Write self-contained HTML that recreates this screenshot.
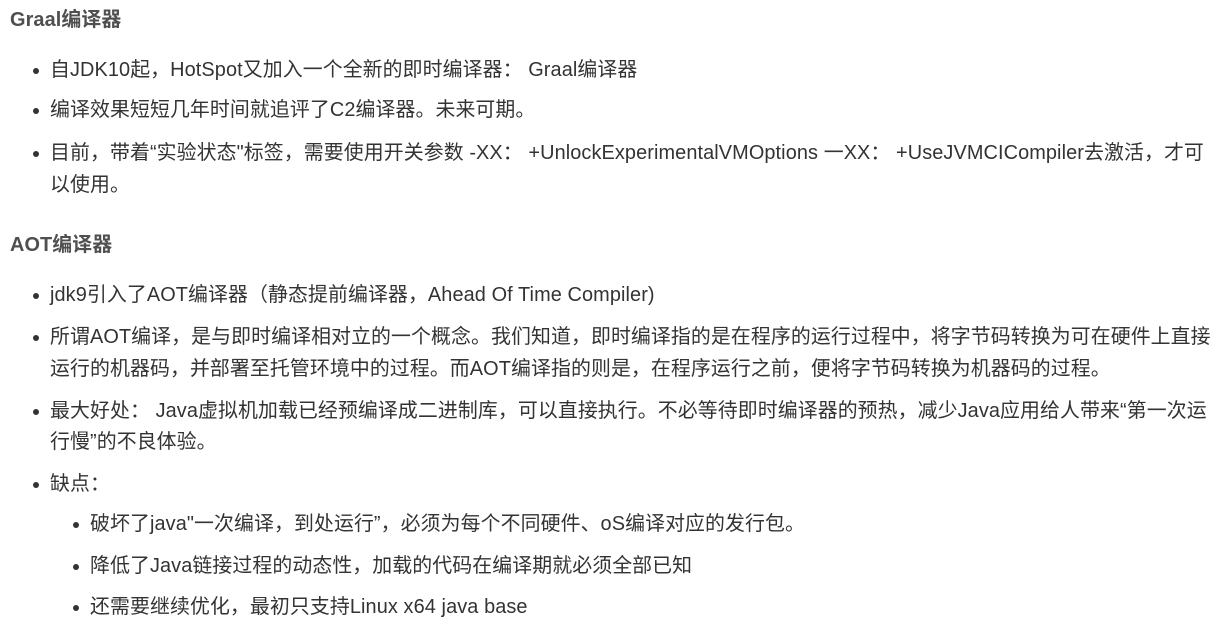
<!DOCTYPE html>
<html><head><meta charset="utf-8"><style>
body{margin:0;width:1225px;height:633px;background:#fff;overflow:hidden;font-family:"Liberation Sans","Noto Sans CJK SC",sans-serif;color:#333;}
.l{position:absolute;white-space:nowrap;font-size:19.9px;line-height:32px;height:32px;letter-spacing:0.1px;}
.h{font-weight:bold;color:#4f4f4f;}
.b{position:absolute;width:6px;height:6px;border-radius:50%;background:#333;}
</style></head><body>
<div class="l h" style="left:10px;top:4px">Graal编译器</div>
<div class="b" style="left:33px;top:68px"></div><div class="l" style="left:50px;top:54px">自JDK10起，HotSpot又加入一个全新的即时编译器： Graal编译器</div>
<div class="b" style="left:33px;top:108px"></div><div class="l" style="left:50px;top:94px">编译效果短短几年时间就追评了C2编译器。未来可期。</div>
<div class="b" style="left:33px;top:151px"></div><div class="l" style="left:50px;top:137px">目前，带着“实验状态"标签，需要使用开关参数 -XX： +UnlockExperimentalVMOptions 一XX： +UseJVMCICompiler去激活，才可</div>
<div class="l" style="left:50px;top:169px">以使用。</div>
<div class="l h" style="left:10px;top:229px">AOT编译器</div>
<div class="b" style="left:33px;top:293px"></div><div class="l" style="left:50px;top:279px">jdk9引入了AOT编译器（静态提前编译器，Ahead Of Time Compiler)</div>
<div class="b" style="left:33px;top:335px"></div><div class="l" style="left:50px;top:321px">所谓AOT编译，是与即时编译相对立的一个概念。我们知道，即时编译指的是在程序的运行过程中，将字节码转换为可在硬件上直接</div>
<div class="l" style="left:50px;top:353px">运行的机器码，并部署至托管环境中的过程。而AOT编译指的则是，在程序运行之前，便将字节码转换为机器码的过程。</div>
<div class="b" style="left:33px;top:409px"></div><div class="l" style="left:50px;top:395px">最大好处： Java虚拟机加载已经预编译成二进制库，可以直接执行。不必等待即时编译器的预热，减少Java应用给人带来“第一次运</div>
<div class="l" style="left:50px;top:426px">行慢”的不良体验。</div>
<div class="b" style="left:33px;top:482px"></div><div class="l" style="left:50px;top:468px">缺点：</div>
<div class="b" style="left:73px;top:522px"></div><div class="l" style="left:90px;top:508px">破坏了java"一次编译，到处运行”，必须为每个不同硬件、oS编译对应的发行包。</div>
<div class="b" style="left:73px;top:564px"></div><div class="l" style="left:90px;top:550px">降低了Java链接过程的动态性，加载的代码在编译期就必须全部已知</div>
<div class="b" style="left:73px;top:605px"></div><div class="l" style="left:90px;top:591px">还需要继续优化，最初只支持Linux x64 java base</div>
</body></html>
